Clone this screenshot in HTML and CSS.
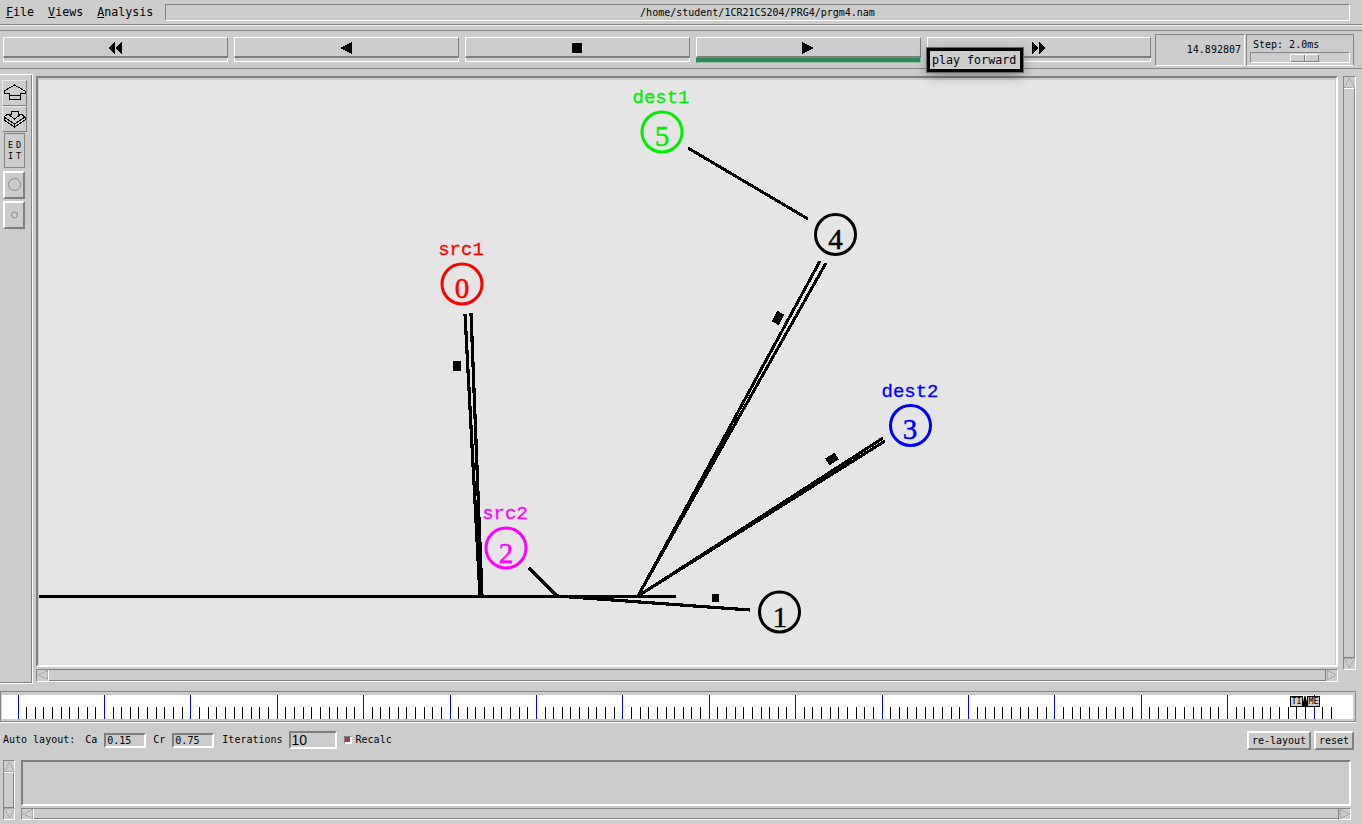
FILE: index.html
```html
<!DOCTYPE html>
<html>
    <head>
        <meta charset="UTF-8">
        <title>nam: prgm4.nam</title>
        <link rel="stylesheet" href="styles.css">
    </head>
    <body>
        <header class="menubar">
            <nav class="menus">
                <span class="menu"><u>F</u>ile</span>
                <span class="menu"><u>V</u>iews</span>
                <span class="menu"><u>A</u>nalysis</span>
            </nav>
            <div class="filename">/home/student/1CR21CS204/PRG4/prgm4.nam</div>
        </header>

        <section class="toolbar">
            <div class="transport">
                <div class="tbtn">
                    <div class="tbtn-face"><svg class="ticon" viewBox="0 0 16 12"><polygon points="1,6 8,0 8,12"/><polygon points="8,6 15,0 15,12"/></svg></div>
                    <div class="tbtn-strip"></div>
                </div>
                <div class="tbtn">
                    <div class="tbtn-face"><svg class="ticon" viewBox="0 0 16 12"><polygon points="2,6 14,0 14,12"/></svg></div>
                    <div class="tbtn-strip"></div>
                </div>
                <div class="tbtn">
                    <div class="tbtn-face"><svg class="ticon" viewBox="0 0 16 12"><rect x="3" y="1" width="10" height="10"/></svg></div>
                    <div class="tbtn-strip"></div>
                </div>
                <div class="tbtn">
                    <div class="tbtn-face"><svg class="ticon" viewBox="0 0 16 12"><polygon points="2,0 14,6 2,12"/></svg></div>
                    <div class="tbtn-strip active"></div>
                </div>
                <div class="tbtn">
                    <div class="tbtn-face"><svg class="ticon" viewBox="0 0 16 12"><polygon points="1,0 8,6 1,12"/><polygon points="8,0 15,6 8,12"/></svg></div>
                    <div class="tbtn-strip"></div>
                </div>
            </div>
            <div class="clock">14.892807</div>
            <div class="step">
                <div class="step-label">Step: 2.0ms</div>
                <div class="step-trough"><div class="step-slider"></div></div>
            </div>
        </section>

        <section class="main">
            <aside class="sidebar">
                <div class="toolbtn">
                    <svg width="25" height="25" viewBox="2 80 25 25"><path class="glyph" d="M14.5 85 L25 91 V93 H20 V99 H9 V93 H4 V91 Z M9 95 H20"/></svg>
                </div>
                <div class="toolbtn">
                    <svg width="25" height="25" viewBox="2 106 25 25"><path class="glyph" d="M11 111 H18 V114 H21 L14.5 119 L8 114 H11 Z M8 114 L4 117 V120 L14.5 127 L25 120 V117 L21 114 M4 117 L14.5 124 L25 117 M14.5 124 V127"/></svg>
                </div>
                <div class="editbtn"><span>ED</span><span>IT</span></div>
                <div class="shapebtn big">
                    <svg width="20" height="25" viewBox="0 0 20 25"><circle class="ring" cx="9.5" cy="11.5" r="6"/></svg>
                </div>
                <div class="shapebtn">
                    <svg width="20" height="25" viewBox="0 0 20 25"><circle class="ring" cx="9.5" cy="12" r="3"/></svg>
                </div>
            </aside>

            <div class="center">
                <div class="canvas-frame">
                    <svg class="canvas" viewBox="39 80 1296 585">
                        <g class="links">
                            <line class="w2" x1="688" y1="148" x2="808" y2="219"/>
                            <line class="w3" x1="465" y1="314" x2="480" y2="596"/>
                            <line class="w3" x1="471" y1="313" x2="482" y2="596"/>
                            <line class="w2" x1="820" y1="261" x2="638" y2="596"/>
                            <line class="w2" x1="826" y1="263" x2="638" y2="596"/>
                            <line class="w2" x1="883" y1="438" x2="638" y2="596"/>
                            <line class="w2" x1="885" y1="441" x2="638" y2="596"/>
                            <line class="w3" x1="39" y1="596.5" x2="676" y2="596.5"/>
                            <line class="w3" x1="557" y1="596" x2="750" y2="610"/>
                            <line class="w2" x1="529" y1="568" x2="557" y2="596"/>
                        </g>
                        <g class="packets">
                            <rect x="453" y="361" width="8" height="10"/>
                            <rect x="712" y="594" width="7" height="8"/>
                            <rect x="-4" y="-6" width="8" height="12" transform="translate(778 318) rotate(28)"/>
                            <rect x="-4" y="-5.5" width="8" height="11" transform="translate(832 459) rotate(57)"/>
                        </g>
                        <g class="node red">
                            <circle cx="462" cy="284" r="20"/>
                            <text class="nodenum" x="462" y="298">0</text>
                            <text class="nodelabel" x="461" y="255">src1</text>
                        </g>
                        <g class="node black">
                            <circle cx="779.5" cy="612" r="20"/>
                            <text class="nodenum" x="780" y="627">1</text>
                        </g>
                        <g class="node magenta">
                            <circle cx="506" cy="548" r="20"/>
                            <text class="nodenum" x="506" y="563">2</text>
                            <text class="nodelabel" x="505" y="519">src2</text>
                        </g>
                        <g class="node blue">
                            <circle cx="910.5" cy="425.5" r="20"/>
                            <text class="nodenum" x="910" y="439">3</text>
                            <text class="nodelabel" x="910" y="397">dest2</text>
                        </g>
                        <g class="node black">
                            <circle cx="835.5" cy="234.5" r="20"/>
                            <text class="nodenum" x="835.5" y="249">4</text>
                        </g>
                        <g class="node green">
                            <circle cx="662" cy="132" r="20"/>
                            <text class="nodenum" x="662" y="146">5</text>
                            <text class="nodelabel" x="661" y="103">dest1</text>
                        </g>
                    </svg>
                </div>
                <div class="hscroll">
                    <div class="arrow"><svg width="12" height="10" viewBox="0 0 12 10"><path class="arrowline" d="M10.5 .5 L1.5 5 L10.5 9.5 Z"/></svg></div>
                    <div class="trough"></div>
                    <div class="arrow"><svg width="12" height="10" viewBox="0 0 12 10"><path class="arrowline" d="M1.5 .5 L10.5 5 L1.5 9.5 Z"/></svg></div>
                </div>
            </div>

            <div class="vscroll main-vscroll">
                <div class="arrow"><svg width="11" height="11" viewBox="0 0 11 11"><path class="arrowline" d="M.5 10.5 L5.5 1 L10.5 10.5 Z"/></svg></div>
                <div class="trough"></div>
                <div class="arrow"><svg width="11" height="11" viewBox="0 0 11 11"><path class="arrowline" d="M.5 .5 L5.5 10 L10.5 .5 Z"/></svg></div>
            </div>
        </section>

        <section class="timeline">
            <svg id="ticks" class="ticks" viewBox="2 695 1351 24"></svg>
            <div class="timemark">
                <span class="timecell">TI</span>
                <svg class="timepin" width="4" height="11" viewBox="0 0 4 11"><polygon points="1.5,0 2.5,0 4,6 4,11 0,11 0,6"/></svg>
                <span class="timecell">ME</span>
            </div>
        </section>

        <section class="controls">
            <span class="lbl">Auto layout:</span>
            <span class="lbl ca">Ca</span>
            <span class="entry">0.15</span>
            <span class="lbl cr">Cr</span>
            <span class="entry">0.75</span>
            <span class="lbl iter">Iterations</span>
            <span class="entry big">10</span>
            <span class="check"><i></i></span>
            <span class="lbl recalc">Recalc</span>
            <button class="cmd relayout">re-layout</button>
            <button class="cmd">reset</button>
        </section>

        <section class="bottom">
            <div class="vscroll">
                <div class="arrow"><svg width="11" height="11" viewBox="0 0 11 11"><path class="arrowline" d="M.5 10.5 L5.5 1 L10.5 10.5 Z"/></svg></div>
                <div class="trough"></div>
                <div class="arrow"><svg width="11" height="11" viewBox="0 0 11 11"><path class="arrowline" d="M.5 .5 L5.5 10 L10.5 .5 Z"/></svg></div>
            </div>
            <div class="bottom-right">
                <div class="textbox"></div>
                <div class="hscroll">
                    <div class="arrow"><svg width="12" height="10" viewBox="0 0 12 10"><path class="arrowline" d="M10.5 .5 L1.5 5 L10.5 9.5 Z"/></svg></div>
                    <div class="trough"></div>
                    <div class="arrow"><svg width="12" height="10" viewBox="0 0 12 10"><path class="arrowline" d="M1.5 .5 L10.5 5 L1.5 9.5 Z"/></svg></div>
                </div>
            </div>
        </section>

        <div class="tooltip">play forward</div>

        <script src="script.js"></script>
    </body>
</html>
```

FILE: styles.css
```css
html,body{
    margin: 0;
    height: 824px;
    overflow: hidden;
    background: #cccccc;
    font-family: "DejaVu Sans Mono", "Liberation Mono", monospace;
    font-size: 10px;
    color: #000;
}
body{
    display: flex;
    flex-direction: column;
    position: relative;
}

/* menu row */
.menubar{
    height: 25px;
    box-sizing: border-box;
    display: flex;
    align-items: flex-start;
    border-bottom: 1px solid #858585;
    box-shadow: 0 1px 0 #eeeeee;
    flex: none;
}
.menus{
    width: 165px;
    padding: 5px 0 0 6px;
    box-sizing: border-box;
    display: flex;
    gap: 14px;
    font-size: 11.67px;
    line-height: 15px;
}
.filename{
    width: 1185px;
    height: 17px;
    margin-top: 4px;
    box-sizing: border-box;
    border: 1px solid;
    border-color: #7f7f7f #fff #fff #7f7f7f;
    text-align: center;
    line-height: 15px;
}

/* toolbar */
.toolbar{
    height: 39px;
    box-sizing: border-box;
    margin-top: 5px;
    border-top: 1px solid #858585;
    border-bottom: 1px solid #858585;
    display: flex;
    align-items: flex-start;
    padding: 3px 0 0 3px;
    flex: none;
}
.transport{
    display: flex;
    gap: 6px;
    margin-top: 3px;
}
.tbtn{
    width: 225px;
}
.tbtn:last-child{
    width: 224px;
}
.tbtn-face{
    height: 21px;
    box-sizing: border-box;
    border: 1px solid;
    border-color: #fff #7f7f7f #7f7f7f #fff;
    border-bottom-width: 2px;
    display: flex;
    align-items: center;
    justify-content: center;
}
.ticon{
    width: 16px;
    height: 12px;
    margin: 1px 2px 0 0;
    shape-rendering: crispEdges;
}
.tbtn:last-child .ticon{
    margin-right: 0;
}
.tbtn-strip{
    height: 4px;
    box-sizing: border-box;
    border: 1px solid #fff;
    border-top: 0;
}
.tbtn-strip.active{
    background: #2e8b57;
    border-color: #8fbfa3;
    border-left-color: #2e8b57;
    height: 5px;
}
.clock{
    width: 90px;
    height: 32px;
    margin-left: 4px;
    box-sizing: border-box;
    border: 1px solid;
    border-color: #858585 #fff #fff #858585;
    text-align: right;
    padding: 9px 3px 0 0;
    line-height: 12px;
}
.step{
    width: 108px;
    height: 32px;
    margin-left: 1px;
    box-sizing: border-box;
    border: 1px solid;
    border-color: #858585 #858585 #fff #858585;
    padding: 3px 3px 0 3px;
}
.step-label{
    line-height: 13px;
    padding-left: 3px;
}
.step-trough{
    height: 11px;
    margin-top: 1px;
    box-sizing: border-box;
    border: 1px solid;
    border-color: #858585 #fff #fff #858585;
    display: flex;
    justify-content: flex-start;
    padding: 1px 0 0 39px;
}
.step-slider{
    width: 29px;
    height: 8px;
    box-sizing: border-box;
    border: 1px solid;
    border-color: #fff #7f7f7f #7f7f7f #fff;
    background: linear-gradient(90deg, transparent 13px, #7f7f7f 13px, #7f7f7f 14px, #fff 14px, #fff 15px, transparent 15px);
}

/* middle section */
.main{
    height: 614px;
    margin-top: 5px;
    display: flex;
    align-items: flex-start;
    flex: none;
}
.sidebar{
    width: 33px;
    height: 610px;
    box-sizing: border-box;
    border-top: 1px solid #fff;
    border-right: 1px solid #fff;
    border-bottom: 1px solid #fff;
    box-shadow: inset -1px 0 0 #858585, inset 0 -1px 0 #858585;
    padding-top: 5px;
    flex: none;
}
.toolbtn{
    width: 25px;
    height: 26px;
    margin-left: 2px;
    box-sizing: border-box;
    border: 1px solid;
    border-color: #e8e8e8 #7f7f7f #7f7f7f #e8e8e8;
    overflow: hidden;
}
.toolbtn svg{
    display: block;
    margin: -1px 0 0 -1px;
}
.glyph{
    fill: none;
    stroke: #000;
    stroke-width: 1;
    shape-rendering: crispEdges;
}
.editbtn{
    width: 21px;
    height: 35px;
    margin: 1px 0 0 4px;
    box-sizing: border-box;
    border: 1px solid #858585;
    display: flex;
    flex-direction: column;
    align-items: center;
    padding-top: 6px;
    font-size: 8.5px;
    line-height: 11px;
    letter-spacing: 3px;
    text-indent: 3px;
}
.shapebtn{
    width: 22px;
    height: 28px;
    margin: 2px 0 0 3px;
    box-sizing: border-box;
    border: 2px solid;
    border-color: #fff #7f7f7f #7f7f7f #fff;
}
.shapebtn.big{
    margin-top: 3px;
}
.shapebtn svg{
    display: block;
}
.ring{
    fill: none;
    stroke: #8a8a8a;
    stroke-width: 1;
}
.center{
    width: 1302px;
    margin-left: 3px;
    padding-top: 2px;
    flex: none;
}
.canvas-frame{
    height: 591px;
    box-sizing: border-box;
    border: 2px solid;
    border-color: #7f7f7f #fff #fff #7f7f7f;
    padding: 2px 1px 0 1px;
}
.canvas{
    display: block;
    width: 1296px;
    height: 585px;
    background: #e5e5e5;
    shape-rendering: crispEdges;
}
.links line{
    stroke: #000;
}
.w2{ stroke-width: 3; }
.w3{ stroke-width: 3.2; }
.node circle{
    fill: none;
    stroke-width: 3;
    shape-rendering: geometricPrecision;
}
.node text{
    text-anchor: middle;
}
.nodenum{
    font-family: "Liberation Serif", serif;
    font-size: 29px;
    stroke-width: .5px;
}
.nodelabel{
    font-family: "Liberation Mono", monospace;
    font-size: 19px;
    stroke-width: .3px;
}
.black circle{ stroke: #000; }
.black text{ fill: #000; stroke: #000; }
.red circle{ stroke: #ff0000; }
.red text{ fill: #ff0000; stroke: #ff0000; }
.magenta circle{ stroke: #ff00ff; }
.magenta text{ fill: #ff00ff; stroke: #ff00ff; }
.blue circle{ stroke: #0000ff; }
.blue text{ fill: #0000ff; stroke: #0000ff; }
.green circle{ stroke: #00ee00; }
.green text{ fill: #00ee00; stroke: #00ee00; }

/* scrollbars */
.hscroll{
    height: 13px;
    margin-top: 2px;
    display: flex;
    box-sizing: border-box;
    border: 1px solid;
    border-color: #858585 #fff #fff #858585;
}
.hscroll .trough{
    flex: 1;
    border-bottom: 1px solid #7f7f7f;
}
.hscroll .arrow{
    width: 12px;
    height: 11px;
    box-sizing: border-box;
    border-right: 1px solid #fff;
    flex: none;
}
.hscroll .arrow:last-child{
    border-right: 0;
    border-left: 1px solid #7f7f7f;
}
.arrow svg{
    display: block;
}
.arrowline{
    fill: none;
    stroke: #9a9a9a;
    stroke-width: 1;
    stroke-dasharray: 2 1;
}
.vscroll{
    width: 13px;
    display: flex;
    flex-direction: column;
    box-sizing: border-box;
    border: 1px solid;
    border-color: #858585 #fff #fff #858585;
    flex: none;
}
.vscroll .trough{
    flex: 1;
    border-top: 1px solid #fff;
    border-bottom: 1px solid #7f7f7f;
    border-right: 1px solid #7f7f7f;
}
.vscroll .arrow{
    height: 11px;
    flex: none;
}
.main-vscroll{
    height: 594px;
    margin: 2px 0 0 5px;
}

/* time slider */
.timeline{
    width: 1356px;
    height: 31px;
    margin-top: 3px;
    box-sizing: border-box;
    border: 1px solid #858585;
    box-shadow: 0 1px 0 #fff;
    padding: 3px 2px 0 1px;
    position: relative;
    flex: none;
}
.ticks{
    display: block;
    width: 1351px;
    height: 24px;
    background: #fff;
    shape-rendering: crispEdges;
}
.tick{
    stroke: #000;
    stroke-width: 1;
}
.tick.major{
    stroke: #0000ff;
}
.timemark{
    position: absolute;
    left: 1289px;
    top: 4px;
    display: flex;
}
.timecell{
    width: 13px;
    height: 11px;
    box-sizing: border-box;
    border: 1px solid #000;
    background: #cccccc;
    font-size: 8.5px;
    line-height: 9px;
    text-align: center;
}
.timepin{
    display: block;
}

/* auto layout row */
.controls{
    height: 36px;
    display: flex;
    align-items: center;
    padding: 0 8px 0 3px;
    box-sizing: border-box;
    width: 1362px;
    flex: none;
}
.lbl{
    line-height: 12px;
}
.ca{ margin-left: 10px; }
.cr{ margin-left: 7px; }
.iter{ margin-left: 8px; }
.recalc{ margin-left: 4px; }
.entry{
    width: 42px;
    height: 15px;
    margin-left: 7px;
    box-sizing: border-box;
    border: 2px solid;
    border-color: #7f7f7f #fff #fff #7f7f7f;
    line-height: 11px;
    padding-left: 1px;
}
.entry.big{
    width: 48px;
    height: 18px;
    margin-left: 6px;
    font-family: "Liberation Sans", sans-serif;
    font-size: 14px;
    line-height: 14px;
}
.check{
    width: 8px;
    height: 8px;
    margin-left: 7px;
    box-sizing: border-box;
    border: 1px solid;
    border-color: #7f7f7f #fff #fff #7f7f7f;
    background: #fff;
    display: flex;
}
.check i{
    width: 5px;
    height: 5px;
    background: #b03060;
}
.cmd{
    height: 19px;
    width: 64px;
    padding: 0;
    margin: 0;
    box-sizing: border-box;
    border: 2px solid;
    border-color: #fff #7f7f7f #7f7f7f #fff;
    background: #cccccc;
    font-family: inherit;
    font-size: 10px;
    color: #000;
}
.relayout{
    margin-left: auto;
    margin-right: 3px;
}
.cmd:last-child{
    width: 40px;
}

/* bottom text area */
.bottom{
    height: 60px;
    margin-top: 2px;
    display: flex;
    padding-left: 3px;
    flex: none;
}
.bottom .vscroll{
    width: 12px;
}
.bottom-right{
    width: 1330px;
    margin-left: 6px;
    flex: none;
}
.textbox{
    height: 46px;
    box-sizing: border-box;
    border: 2px solid;
    border-color: #7f7f7f #fff #fff #7f7f7f;
}
.bottom-right .hscroll{
    height: 12px;
    margin-top: 2px;
}

/* tooltip over the play button */
.tooltip{
    position: absolute;
    left: 927px;
    top: 48px;
    width: 96px;
    height: 24px;
    box-sizing: border-box;
    border: 3px solid #000;
    background: #cccccc;
    box-shadow: 0 0 0 1px #666, 0 4px 12px rgba(0,0,0,.35);
    font-size: 11.67px;
    line-height: 18px;
    padding-left: 2px;
    white-space: nowrap;
}
```

FILE: script.js
```js
var svg = document.getElementById('ticks');
var ns = 'http://www.w3.org/2000/svg';

// one small tick every 8.64px, every tenth one is long and blue
for (var i = 0; i <= 152; i++) {
    var x = Math.floor(18 + i * 8.64) + 0.5;
    var line = document.createElementNS(ns, 'line');
    line.setAttribute('x1', x);
    line.setAttribute('x2', x);
    line.setAttribute('y1', i % 10 == 0 ? 695 : 707);
    line.setAttribute('y2', 719);
    line.setAttribute('class', i % 10 == 0 ? 'tick major' : 'tick');
    svg.appendChild(line);
}
```
